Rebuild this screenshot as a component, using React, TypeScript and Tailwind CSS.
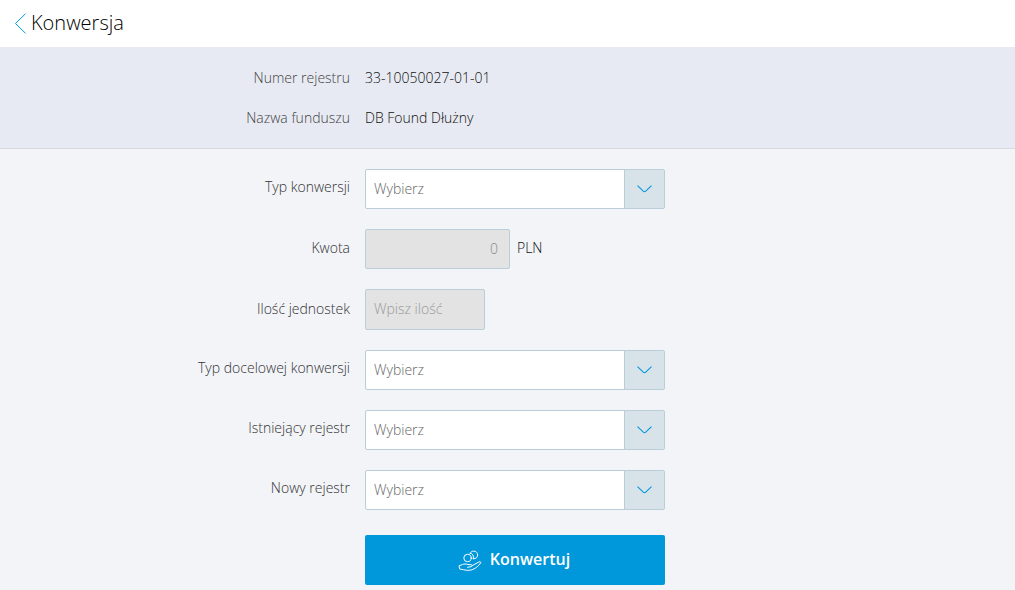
import React from "react";

interface IRowProps {
  id: string;
  label: string;
  children: React.ReactNode;
}

interface ISelectRowProps {
  id: string;
  label: string;
}

function SummaryRow({ label, value }: { label: string; value: string }) {
  return (
    <div className="grid grid-cols-[10fr_19fr] leading-5">
      <dt className="text-right text-[#444]">{label}</dt>
      <dd className="pl-[15px] text-[#111]">{value}</dd>
    </div>
  );
}

function InputRow({ id, label, children }: IRowProps) {
  return (
    <div className="grid grid-cols-[10fr_19fr] items-center">
      <label htmlFor={id} className="text-right leading-5 pb-0.5">
        {label}
      </label>
      <div className="flex items-center pl-[15px]">{children}</div>
    </div>
  );
}

function SelectRow({ id, label }: ISelectRowProps) {
  return (
    <div className="grid grid-cols-[10fr_19fr]">
      <label htmlFor={id} className="pt-2 text-right leading-5">
        {label}
      </label>
      <div className="pl-[15px]">
        <div className="relative w-full max-w-[300px]">
          <select
            id={id}
            defaultValue=""
            className="block h-10 w-full appearance-none rounded-xs border border-[#b9ced8] bg-white pl-2 pr-12 text-[#666]"
          >
            <option value="">Wybierz</option>
          </select>
          <span className="pointer-events-none absolute inset-y-px right-px flex w-10 items-center justify-center border-l border-[#b9ced8] bg-[#d8e2e9]">
            <svg width="15" height="8" viewBox="0 0 15 8" fill="none" stroke="#0098db" strokeWidth="1.1">
              <path d="M0.5 0.7L6.3 6.2Q7.5 7.2 8.7 6.2L14.5 0.7" />
            </svg>
          </span>
        </div>
      </div>
    </div>
  );
}

function CoinsHandIcon() {
  return (
    <svg
      width="24"
      height="24"
      viewBox="0 0 24 24"
      fill="none"
      stroke="#fff"
      strokeLinecap="round"
      strokeLinejoin="round"
    >
      <circle cx="9.5" cy="11" r="3.7" />
      <path d="M12.2 6.2C12.8 4.8 14.2 4.1 15.8 4.1C18 4.1 19.7 5.8 19.7 8C19.7 10.2 18 11.9 15.3 11.8" />
      <path d="M12.2 6.2C14.6 6.4 16 8.6 15.3 11.8" />
      <path d="M9.5 20.3L13.4 19.6C14.6 19.3 14.5 17.9 13.2 17.8L9.8 17.5C8 16.8 6 16.8 4.3 17.6L1 18.8L1.6 22L5.4 22.7C8.5 23.6 12.4 23.6 15 22.4C18.4 20.8 20.8 18.6 22.6 16C23.2 14.9 22 14.4 20.9 15L14.2 18.6" />
    </svg>
  );
}

function App() {
  return (
    <div className="min-h-screen bg-[#f2f4f8] pb-[5px] font-['Open_Sans',sans-serif] text-sm font-light text-[#333]">
      <header className="flex h-[47px] items-center bg-white pl-[14px] pb-px">
        <a href="#" aria-label="Wstecz">
          <svg width="13" height="21" viewBox="0 0 13 21" fill="none" stroke="#0098db">
            <path d="M11.5 0.7L1.5 10.5L11.5 20.3" />
          </svg>
        </a>
        <h1 className="pl-1 text-xl font-light leading-7 text-black">Konwersja</h1>
      </header>
      <dl className="flex flex-col gap-5 border-b border-[#d5dae2] bg-[#e7eaf2] pt-[21px] pb-5">
        <SummaryRow label="Numer rejestru" value="33-10050027-01-01" />
        <SummaryRow label="Nazwa funduszu" value="DB Found Dłużny" />
      </dl>
      <form className="flex flex-col gap-5 pt-5">
        <SelectRow id="type" label="Typ konwersji" />
        <InputRow id="amount" label="Kwota">
          <input
            id="amount"
            disabled
            defaultValue="0"
            className="h-10 w-[145px] rounded-xs border border-[#b9ced8] bg-[#e3e3e3] px-[11px] pb-0.5 text-right text-[#888]"
          />
          <span className="pl-[7px] pb-0.5 leading-5 text-[#111]">PLN</span>
        </InputRow>
        <InputRow id="units" label="Ilość jednostek">
          <input
            id="units"
            disabled
            placeholder="Wpisz ilość"
            className="h-[41px] w-[120px] rounded-xs border border-[#b9ced8] bg-[#e3e3e3] px-2 pb-0.5 placeholder:text-[#999]"
          />
        </InputRow>
        <SelectRow id="target" label="Typ docelowej konwersji" />
        <SelectRow id="existing" label="Istniejący rejestr" />
        <SelectRow id="new" label="Nowy rejestr" />
        <div className="grid grid-cols-[10fr_19fr] pt-[5px]">
          <div className="col-start-2 pl-[15px]">
            <button
              type="button"
              className="flex h-[50px] w-full max-w-[300px] items-center justify-center gap-2 rounded-xs bg-[#0098db] pb-0.5 pr-0.5 text-base font-semibold text-white"
            >
              <CoinsHandIcon />
              <span>Konwertuj</span>
            </button>
          </div>
        </div>
      </form>
    </div>
  );
}

export default App;
